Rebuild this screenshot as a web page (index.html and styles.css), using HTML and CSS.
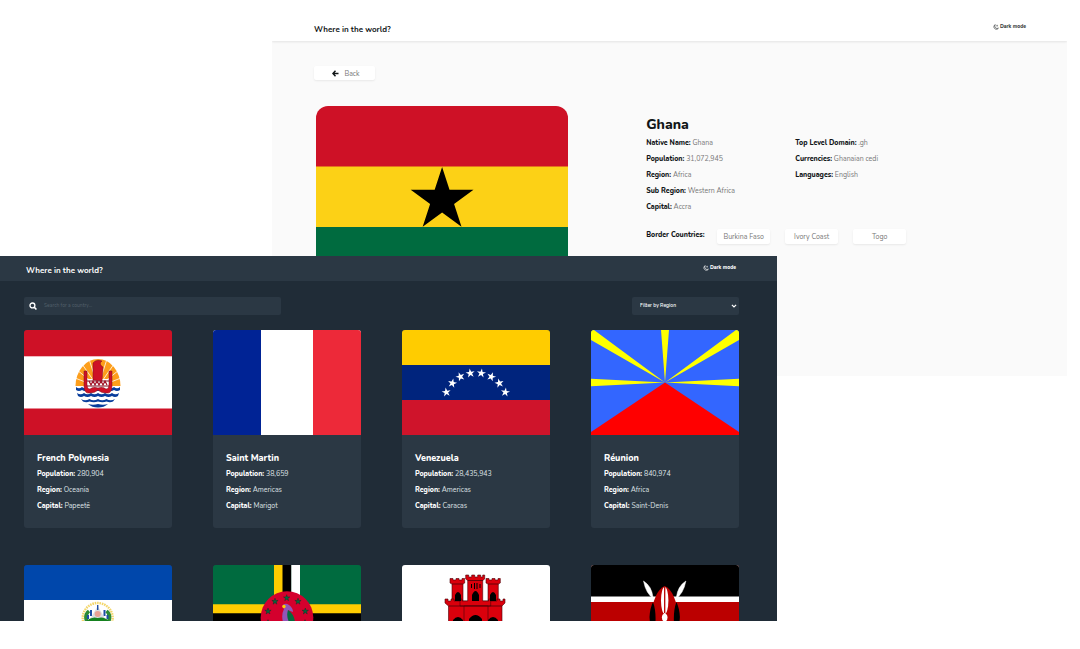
FILE: index.html
```
<!DOCTYPE html>
<html lang="en">
<head>
<meta charset="utf-8">
<title>Where in the world?</title>
<link rel="stylesheet" href="styles.css">
</head>
<body>
<svg class="defs" aria-hidden="true">
  <defs>
    <polygon id="star" points="0,-10 2.25,-3.09 9.51,-3.09 3.63,1.18 5.88,8.09 0,3.82 -5.88,8.09 -3.63,1.18 -9.51,-3.09 -2.25,-3.09"/>
    <symbol id="moon" viewBox="0 0 16 16">
      <path d="M6 1.500A6.600 6.600 0 1 0 14.500 11 6.500 6.500 0 0 1 6 1.500Z" fill="none" stroke="currentColor" stroke-width="1.800" stroke-linejoin="round"/>
      <path d="M11 2v5M8.500 4.500h5" stroke="currentColor" stroke-width="1.200"/>
    </symbol>
  </defs>
</svg>
<div class="stage">
  <section class="window light">
    <header class="topbar">
      <h1 class="brand">Where in the world?</h1>
      <button class="mode" type="button"><svg class="mode-icon"><use href="#moon"/></svg>Dark mode</button>
    </header>
    <main class="detail">
      <button class="chip back" type="button">
        <svg class="back-icon" viewBox="0 0 14 14"><path d="M7 1.500 1.800 7 7 12.500M2.500 7H13" fill="none" stroke="currentColor" stroke-width="2.900"/></svg>Back
      </button>
      <div class="country">
        <svg class="big-flag" viewBox="0 0 252 181" preserveAspectRatio="none" role="img" aria-label="Flag of Ghana">
          <rect width="252" height="61" fill="#ce1126"/>
          <rect y="60.500" width="252" height="60.500" fill="#fcd116"/>
          <rect y="121" width="252" height="60" fill="#006b3f"/>
          <use href="#star" transform="translate(126 94) scale(3.300)"/>
        </svg>
        <div class="info">
          <h2 class="country-name">Ghana</h2>
          <div class="facts">
            <ul class="list">
              <li><b>Native Name:</b> Ghana</li>
              <li><b>Population:</b> 31,072,945</li>
              <li><b>Region:</b> Africa</li>
              <li><b>Sub Region:</b> Western Africa</li>
              <li><b>Capital:</b> Accra</li>
            </ul>
            <ul class="list">
              <li><b>Top Level Domain:</b> .gh</li>
              <li><b>Currencies:</b> Ghanaian cedi</li>
              <li><b>Languages:</b> English</li>
            </ul>
          </div>
          <div class="borders">
            <b class="borders-label">Border Countries:</b>
            <button class="chip" type="button">Burkina Faso</button>
            <button class="chip" type="button">Ivory Coast</button>
            <button class="chip" type="button">Togo</button>
          </div>
        </div>
      </div>
    </main>
  </section>

  <section class="window dark">
    <header class="topbar">
      <h1 class="brand">Where in the world?</h1>
      <button class="mode" type="button"><svg class="mode-icon"><use href="#moon"/></svg>Dark mode</button>
    </header>
    <main class="browse">
      <form class="filters">
        <label class="search">
          <svg class="search-icon" viewBox="0 0 14 14"><circle cx="6" cy="6" r="4.300" fill="none" stroke="currentColor" stroke-width="2.300"/><path d="m9 9 4 4" stroke="currentColor" stroke-width="2.600"/></svg>
          <input class="search-input" type="text" placeholder="Search for a country..." aria-label="Search for a country">
        </label>
        <div class="region">
          <select class="region-select" aria-label="Filter by Region"><option>Filter by Region</option></select>
          <svg class="chevron" viewBox="0 0 10 10"><path d="m1.500 3 3.500 3.500L8.500 3" fill="none" stroke="currentColor" stroke-width="2"/></svg>
        </div>
      </form>
      <div class="cards">
        <article class="card">
          <svg class="flag" viewBox="0 0 148 105" preserveAspectRatio="none" role="img" aria-label="Flag of French Polynesia">
            <rect width="148" height="105" fill="#ce1126"/>
            <rect y="26.300" width="148" height="52.200" fill="#fff"/>
            <path d="M51.500 56a22.500 27 0 1 1 45 0Z" fill="#fd9e1b"/>
            <path d="M74 57 51 48M74 57 53 40M74 57 58 34M74 57 65 29M74 57 83 29M74 57 90 34M74 57 95 40M74 57 97 48" stroke="#fff" stroke-width=".8"/>
            <g fill="#083d9c">
              <path d="M52 57q3 2.500 6 0 3 2.500 6 0 3 2.500 6 0 4 2.500 8 0 3 2.500 6 0 3 2.500 6 0 3 2.500 6 0v3q-3 2-6 0-3 2-6 0-3 2-6 0-4 2-8 0-3 2-6 0-3 2-6 0-3 2-6 0Z"/>
              <path d="M53 63q3.500 2.500 7 0 3.500 2.500 7 0 3.500 2.500 7 0 3.500 2.500 7 0 3.500 2.500 7 0 3.500 2.500 7 0l-1 3q-3 2-6 0-3.500 2-7 0-3.500 2-7 0-3.500 2-7 0-3.500 2-7 0-3 2-6 0Z"/>
              <path d="M57 69q4 2.500 8.500 0 4 2.500 8.500 0 4 2.500 8.500 0 4 2.500 8.500 0l-2 2.500q-3 1.500-6.500 0-4 1.500-8.500 0-4 1.500-8.500 0-3 1.500-6.500 0Z"/>
              <path d="M64 74q5 1.500 10 0 5 1.500 10 0-4 3.500-10 3.500T64 74Z"/>
            </g>
            <path d="M62 49h24v11H62Z" fill="#fff"/>
            <path d="M63 51h22M63 56h22" stroke="#7a1020"/>
            <path d="m65 51 2 4 2-4 2 4 2-4 2 4 2-4 2 4 2-4 2 4" fill="none" stroke="#a01024" stroke-width="1.200"/>
            <path d="M69 50V33q3-4 9-2-4 3 1 6l-1 14Z" fill="#ce1126" stroke="#7a1020" stroke-width=".5"/>
            <path d="M60 41h3v13q0 5 3 5 3-3 8-1 5-2 8 1 3 0 3-5V41h3v15q0 8-6 7-5 0-8-3-3 3-8 3-6 1-6-7Z" fill="#ce1126" stroke="#7a1020" stroke-width=".5"/>
          </svg>
          <div class="card-body">
            <h2 class="card-title">French Polynesia</h2>
            <ul class="list"><li><b>Population:</b> 280,904</li><li><b>Region:</b> Oceania</li><li><b>Capital:</b> Papeetē</li></ul>
          </div>
        </article>
        <article class="card">
          <svg class="flag" viewBox="0 0 148 105" preserveAspectRatio="none" role="img" aria-label="Flag of Saint Martin">
            <rect width="148" height="105" fill="#fff"/>
            <rect width="48" height="105" fill="#002395"/>
            <rect x="100" width="48" height="105" fill="#ed2939"/>
          </svg>
          <div class="card-body">
            <h2 class="card-title">Saint Martin</h2>
            <ul class="list"><li><b>Population:</b> 38,659</li><li><b>Region:</b> Americas</li><li><b>Capital:</b> Marigot</li></ul>
          </div>
        </article>
        <article class="card">
          <svg class="flag" viewBox="0 0 148 105" preserveAspectRatio="none" role="img" aria-label="Flag of Venezuela">
            <rect width="148" height="35" fill="#fc0"/>
            <rect y="35" width="148" height="35" fill="#00247d"/>
            <rect y="70" width="148" height="35" fill="#cf142b"/>
            <g fill="#fff">
              <use href="#star" transform="translate(44.300 62.300) rotate(-8) scale(.48)"/>
              <use href="#star" transform="translate(50.300 53.300) rotate(12) scale(.48)"/>
              <use href="#star" transform="translate(58.300 46.700) rotate(-20) scale(.48)"/>
              <use href="#star" transform="translate(68.300 43.300) rotate(-8) scale(.48)"/>
              <use href="#star" transform="translate(79.300 43.300) rotate(8) scale(.48)"/>
              <use href="#star" transform="translate(89.300 46.700) rotate(20) scale(.48)"/>
              <use href="#star" transform="translate(97.300 53.300) rotate(-12) scale(.48)"/>
              <use href="#star" transform="translate(103.300 62.300) rotate(8) scale(.48)"/>
            </g>
          </svg>
          <div class="card-body">
            <h2 class="card-title">Venezuela</h2>
            <ul class="list"><li><b>Population:</b> 28,435,943</li><li><b>Region:</b> Americas</li><li><b>Capital:</b> Caracas</li></ul>
          </div>
        </article>
        <article class="card">
          <svg class="flag" viewBox="0 0 148 105" preserveAspectRatio="none" role="img" aria-label="Flag of Réunion">
            <rect width="148" height="105" fill="#36f"/>
            <path d="M74 52.500 70 0h8ZM74 52.500 0 48.700v7.600ZM74 52.500l74-3.800v7.600ZM74 52.500 0 10V0h3ZM74 52.500 148 10V0h-3Z" fill="#ff0"/>
            <path d="M74 52.500 148 102v3H0v-3Z" fill="red"/>
          </svg>
          <div class="card-body">
            <h2 class="card-title">Réunion</h2>
            <ul class="list"><li><b>Population:</b> 840,974</li><li><b>Region:</b> Africa</li><li><b>Capital:</b> Saint-Denis</li></ul>
          </div>
        </article>
        <article class="card">
          <svg class="flag" viewBox="0 0 148 105" preserveAspectRatio="none" role="img" aria-label="Flag of El Salvador">
            <rect width="148" height="105" fill="#0047ab"/>
            <rect y="35" width="148" height="35" fill="#fff"/>
            <circle cx="73.700" cy="53" r="15" fill="none" stroke="#f3d66a" stroke-width="2.400" stroke-dasharray="1.600 .8"/>
            <path d="M63 57q-3-7 2-11M84.500 57q3-7-2-11" fill="none" stroke="#2c8a35" stroke-width="3.500"/>
            <path d="M67 45v6M80.500 45v6M64 50v4M83.500 50v4" stroke="#1d4da5" stroke-width="2"/>
            <path d="M73.700 41 83 57H64.500Z" fill="#d9dde0"/>
            <circle cx="73.700" cy="49" r="3" fill="#e8a194"/>
            <path d="M73.700 40v5" stroke="#1d4da5" stroke-width="1.400"/>
            <path d="M61 57q6-6 12.700-4 7-2 12.300 4Z" fill="#15811f"/>
          </svg>
        </article>
        <article class="card">
          <svg class="flag" viewBox="0 0 148 105" preserveAspectRatio="none" role="img" aria-label="Flag of Dominica">
            <rect width="148" height="105" fill="#006b3f"/>
            <path d="M61 0h9v105h-9Z" fill="#fc0"/>
            <path d="M69.500 0h9v105h-9ZM0 48h148v9H0Z"/>
            <path d="M78.300 0H87v39.300h-8.700ZM0 57h148v9H0Z" fill="#fff"/>
            <path d="M0 39.300h148v9H0Z" fill="#fc0"/>
            <circle cx="74" cy="52.500" r="26.300" fill="#d4002d"/>
            <g fill="#006b3f" stroke="#132" stroke-width="1.500">
              <use href="#star" transform="translate(55 46.300) scale(.33)"/>
              <use href="#star" transform="translate(62 36.500) scale(.33)"/>
              <use href="#star" transform="translate(73.700 33) scale(.33)"/>
              <use href="#star" transform="translate(85 36.500) scale(.33)"/>
              <use href="#star" transform="translate(92.300 46.300) scale(.33)"/>
              <use href="#star" transform="translate(55 58) scale(.33)"/>
              <use href="#star" transform="translate(92 58) scale(.33)"/>
            </g>
            <path d="M69 41q3-4 7-1 4 3 4 7-3-1-5-2l3 12h-8q-2-7 1-13Z" fill="#9256b8"/>
            <path d="M75 45q6 4 7 12h-6q-3-6-1-12Z" fill="#046b3e"/>
            <circle cx="71" cy="41.500" r="1.700" fill="#fc0"/>
          </svg>
        </article>
        <article class="card">
          <svg class="flag" viewBox="0 0 148 105" preserveAspectRatio="none" role="img" aria-label="Flag of Gibraltar">
            <rect width="148" height="105" fill="#fff"/>
            <g fill="#da000c" stroke="#4b0006" stroke-width=".6">
              <path d="M48 13.500h3v1.500h3v-1.500h3v1.500h3v-1.500h2.700V18L61 19v18H50V19l-2-1Z"/>
              <path d="M84 13.500h3v1.500h3v-1.500h3v1.500h3v-1.500h2.300V18l-2 1v18H86V19l-2-1Z"/>
              <path d="M43 34h3v2h3v-2h3v2h43v-2h3v2h3v-2h2v4l-3 3v40H46.500V41L43 38Z"/>
              <path d="M63.700 10h3v2h3v-2h3v2h3v-2h3v2h2v-2h2v4l-2 1.500V36h6v-2h2v7H58v-7h2v2h5.700V15.500l-2-1.500Z"/>
              <path d="M62 41h24v40H62Z"/>
            </g>
            <path d="M65.700 15.500h15.300M50 19h11M86 19h10.500M46.500 41h53.500" stroke="#4b0006" stroke-width=".8"/>
            <path d="M53 36v-6q3-6 6 0v6ZM70 36v-6q3.500-8 7 0v6ZM88 36v-6q3-6 6 0v6ZM51 58v-3q5-6 10 0v3ZM67 58v-4q6.500-8 13 0v4ZM86 58v-3q5-6 10 0v3Z"/>
            <path d="M69.500 19v4M72.500 18v6M75 18v6M78 19v4" stroke="#000"/>
          </svg>
        </article>
        <article class="card">
          <svg class="flag" viewBox="0 0 148 105" preserveAspectRatio="none" role="img" aria-label="Flag of Kenya">
            <rect width="148" height="105" fill="#b00"/>
            <rect width="148" height="37" fill="#fff"/>
            <rect width="148" height="31.500"/>
            <path d="M52.500 16q8 5 9.500 16l1 2q-8-5-10.500-18ZM94.900 16q-8 5-9.500 16l-1 2q8-5 10.500-18Z" fill="#fff" stroke="#fff" stroke-width=".5"/>
            <path d="M73.700 21q11 5 14 31.500-3 26.500-14 31.500-11-5-14-31.500 3-26.500 14-31.500Z" fill="#b00"/>
            <path d="M62 37q3 8 2.500 20-1 9-2.500 12-3-8-3.500-17 .5-9 3.500-15ZM85.400 37q-3 8-2.500 20 1 9 2.500 12 3-8 3.500-17-.5-9-3.500-15Z"/>
            <ellipse cx="73.700" cy="35.500" rx="3.700" ry="13.500" fill="#fff"/>
            <path d="M73.700 22v26" stroke="#b00" stroke-width="1.300"/>
            <ellipse cx="73.700" cy="52.500" rx="2.800" ry="3.800" fill="#fff"/>
          </svg>
        </article>
      </div>
    </main>
  </section>
</div>
</body>
</html>
```
FILE: styles.css
```
* { box-sizing: border-box; }

body {
  margin: 0;
  background: #fff;
  font-family: Nunito, "Open Sans", sans-serif;
  font-size: 7px;
  line-height: 16px;
}

h1, h2, ul { margin: 0; padding: 0; }
button, input, select { font: inherit; color: inherit; border: 0; }
svg { display: block; flex: none; }
.defs { position: absolute; width: 0; height: 0; }

/* Two overlapping windows share the middle cell */
.stage {
  display: grid;
  grid-template-columns: 272fr 505fr 290fr 13fr;
  grid-template-rows: 256px 120px 245px;
}
.window { min-width: 0; min-height: 0; overflow: hidden; }
.light { grid-area: 1 / 2 / 3 / 4; background: #fafafa; color: #111517; }
.dark { grid-area: 2 / 1 / 4 / 3; background: #202c37; color: #fff; }

.topbar { display: flex; justify-content: space-between; align-items: flex-start; padding: 0 41px; }
.light .topbar { height: 41px; padding: 20px 41px 0 42px; background: #fff; box-shadow: 0 1px 2px #e4e4e4; }
.dark .topbar { height: 25px; padding: 5px 41px 0 26px; background: #2b3844; }
.brand { font-size: 8px; line-height: 20px; font-weight: 700; }
.mode { display: flex; align-items: center; gap: 1px; padding: 0; background: none; font-size: 5px; line-height: 14px; font-weight: 800; }
.light .mode { color: #3a3e40; }
.mode-icon { width: 6px; height: 6px; }

.list { list-style: none; font-weight: 400; }
.light .list { color: #777; }
.dark .list { color: #dfe2e4; }
.light .list b { color: #111517; }
.dark .list b { color: #fff; }
b { font-weight: 800; }

.detail { padding: 25px 41px 0 42px; }
.chip {
  width: 53px;
  height: 15px;
  padding: 0;
  background: #fff;
  border-radius: 2px;
  box-shadow: 0 1px 2px #e8e8e8;
  color: #777;
  font-weight: 400;
  line-height: 15px;
  white-space: nowrap;
}
.back { display: flex; align-items: center; justify-content: center; gap: 5px; width: 61px; height: 14px; padding-left: 3px; }
.back-icon { width: 7px; height: 7px; color: #111517; }

.country { display: grid; grid-template-columns: 253fr 381fr; column-gap: 78px; margin: 26px 0 0 2px; }
.big-flag { width: 100%; height: 181px; border-radius: 12px; }
.country-name { padding-top: 9px; font-size: 14px; line-height: 20px; font-weight: 800; }
.facts { display: grid; grid-template-columns: 149px 1fr; }
.borders { display: flex; gap: 15px; margin-top: 14px; }
.borders-label { width: 56px; line-height: 12px; white-space: nowrap; }

.browse { padding: 16px 38px 0 24px; }
.filters { display: flex; justify-content: space-between; }
.search, .region { display: flex; align-items: center; height: 18px; background: #2b3844; border-radius: 2px; }
.search { flex: 0 1 257px; gap: 7px; padding-left: 5px; }
.search-icon { width: 8px; height: 8px; }
.search-input { flex: 1; min-width: 0; padding: 0; background: none; font-size: 5px; }
.search-input::placeholder { color: #53606b; }
.region { position: relative; flex: 0 0 107px; }
.region-select { appearance: none; width: 100%; height: 100%; padding: 0 8px; background: none; font-size: 5px; font-weight: 600; }
.chevron { position: absolute; right: 2px; width: 6px; height: 6px; pointer-events: none; }

.cards { display: grid; grid-template-columns: repeat(4, 1fr); gap: 37px 41px; margin-top: 15px; }
.card { overflow: hidden; background: #2b3844; border-radius: 3px; }
.flag { width: 100%; height: 105px; }
.card-body { padding: 15px 13px 14px; }
.card-title { font-size: 9px; line-height: 16px; font-weight: 800; }
```
